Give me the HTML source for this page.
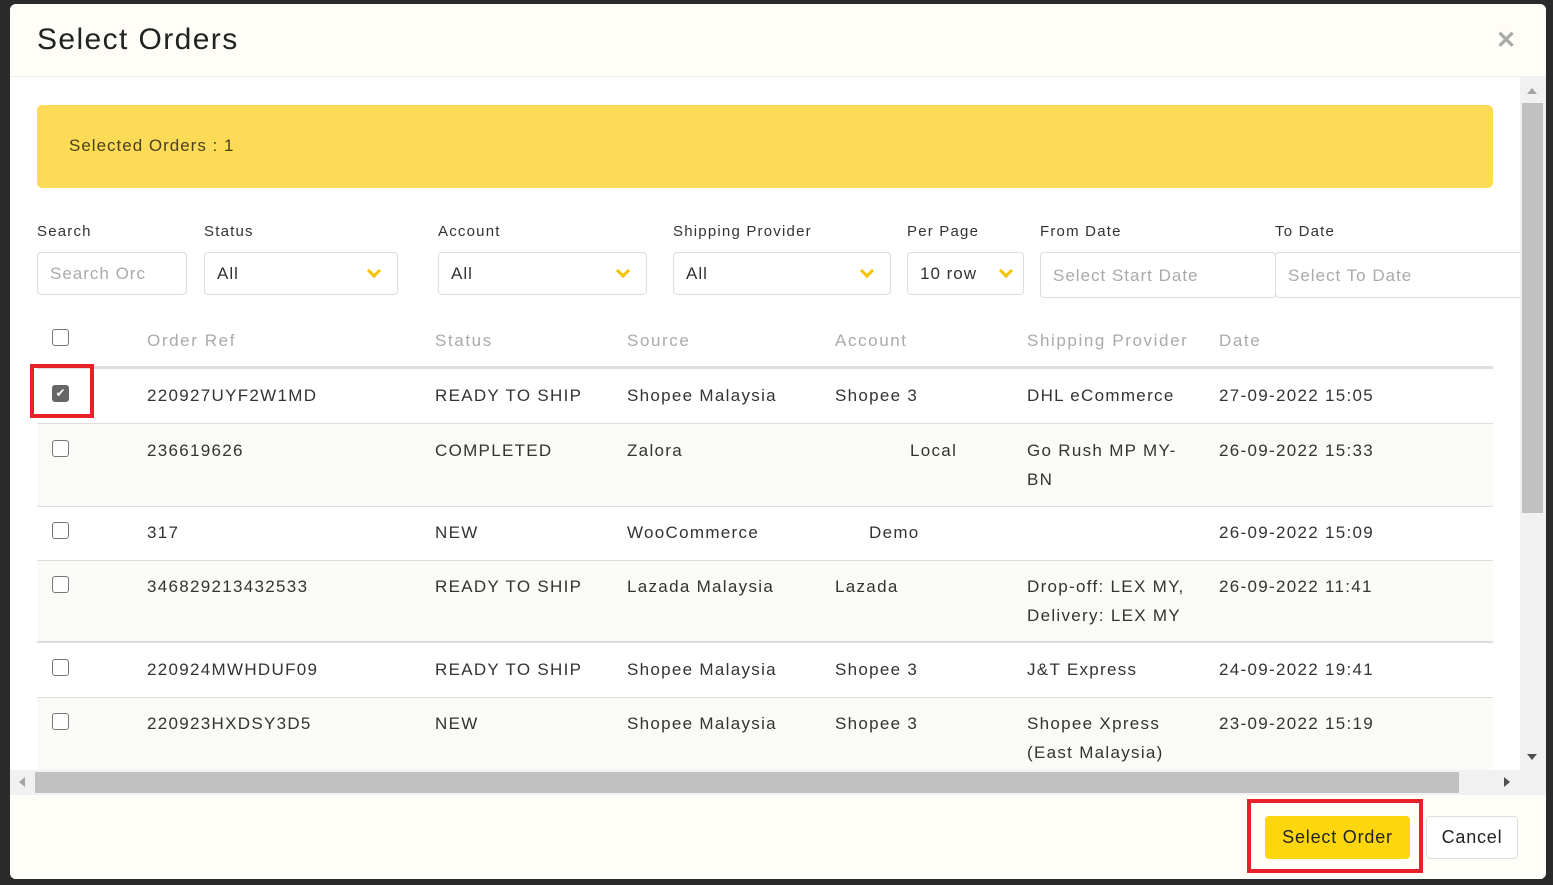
<!DOCTYPE html>
<html><head><style>
*{box-sizing:border-box;margin:0;padding:0}
body{width:1553px;height:885px;background:#2b2b2b;font-family:"Liberation Sans",sans-serif;position:relative;overflow:hidden;color:#333}
.m{position:absolute;left:10px;top:4px;width:1536px;height:875px;background:#fff;border-radius:6px;overflow:hidden}
.hd{position:absolute;left:0;top:0;width:1536px;height:73px;background:#fffdf8;border-bottom:1px solid #f1eee6}
.hd h1{position:absolute;left:27px;top:19px;font-weight:normal;font-size:30px;color:#222;letter-spacing:1.4px}
.x{position:absolute;left:1486px;top:22px;font-size:24px;color:#aaa;font-weight:bold}
.ab{position:absolute;}
.banner{left:27px;top:101px;width:1456px;height:83px;background:#fedb56;border-radius:5px;font-size:17px;color:#4a4020;padding:31px 32px;letter-spacing:1px}
.lbl{font-size:15px;color:#333;letter-spacing:1.2px;top:219px}
.inp{top:248px;height:43px;border:1px solid #ddd;border-radius:4px;font-size:17px;color:#333;padding:11px 12px;letter-spacing:1px}
.ph{color:#aaa}
.chev{position:absolute;right:18px;top:13px;width:10px;height:10px;border-right:3px solid #f5c400;border-bottom:3px solid #f5c400;transform:rotate(45deg)}
.th{top:327px;font-size:17px;color:#aaa;letter-spacing:1.6px}
.row{position:absolute;left:27px;width:1456px;border-bottom:1px solid #ddd}
.c{position:absolute;font-size:17px;color:#333;letter-spacing:1.3px;line-height:29px}
.cb{position:absolute;left:42px;width:17px;height:17px;border:1.5px solid #777;border-radius:3px;background:#fff}
.red{position:absolute;border:4px solid #e8202a}
</style></head><body>
<div class="m">
<div class="hd"><h1>Select Orders</h1><div class="x">✕</div></div>
<div class="ab banner">Selected Orders : 1</div>
<div class="ab lbl" style="left:27px">Search</div>
<div class="ab lbl" style="left:194px">Status</div>
<div class="ab lbl" style="left:428px">Account</div>
<div class="ab lbl" style="left:663px">Shipping Provider</div>
<div class="ab lbl" style="left:897px">Per Page</div>
<div class="ab lbl" style="left:1030px">From Date</div>
<div class="ab lbl" style="left:1265px">To Date</div>
<div class="ab inp ph" style="left:27px;width:150px;overflow:hidden;white-space:nowrap">Search Orc</div>
<div class="ab inp" style="left:194px;width:194px">All<span class="chev"></span></div>
<div class="ab inp" style="left:428px;width:209px">All<span class="chev"></span></div>
<div class="ab inp" style="left:663px;width:218px">All<span class="chev"></span></div>
<div class="ab inp" style="left:897px;width:117px">10 row<span class="chev" style="right:12px"></span></div>
<div class="ab inp ph" style="left:1030px;width:236px;top:248px;height:46px;padding-top:13px">Select Start Date</div>
<div class="ab inp ph" style="left:1265px;width:260px;top:248px;height:46px;padding-top:13px">Select To Date</div>
<div class="cb" style="top:325px"></div>
<div class="ab th" style="left:137px">Order Ref</div>
<div class="ab th" style="left:425px">Status</div>
<div class="ab th" style="left:617px">Source</div>
<div class="ab th" style="left:825px">Account</div>
<div class="ab th" style="left:1017px">Shipping Provider</div>
<div class="ab th" style="left:1209px">Date</div>
<div class="row" style="top:362px;height:3px;background:#ddd;border:0"></div>
<div class="row" style="top:365px;height:55px"></div>
<div class="row" style="top:420px;height:83px;background:#fafaf7"></div>
<div class="row" style="top:503px;height:54px"></div>
<div class="row" style="top:557px;height:82px;background:#fafaf7;border-bottom:2px solid #ddd"></div>
<div class="row" style="top:639px;height:55px"></div>
<div class="row" style="top:694px;height:80px;background:#fafaf7"></div>
<div class="cb" style="top:381px;background:#666;border-color:#666;color:#fff;font-size:12px;text-align:center;line-height:14px">✔</div>
<div class="red" style="left:20px;top:360px;width:64px;height:54px"></div>
<div class="c" style="left:137px;top:377px">220927UYF2W1MD</div><div class="c" style="left:425px;top:377px">READY TO SHIP</div><div class="c" style="left:617px;top:377px">Shopee Malaysia</div><div class="c" style="left:825px;top:377px">Shopee 3</div><div class="c" style="left:1017px;top:377px">DHL eCommerce</div><div class="c" style="left:1209px;top:377px">27-09-2022 15:05</div>
<div class="cb" style="top:436px"></div>
<div class="c" style="left:137px;top:432px">236619626</div><div class="c" style="left:425px;top:432px">COMPLETED</div><div class="c" style="left:617px;top:432px">Zalora</div><div class="c" style="left:900px;top:432px">Local</div><div class="c" style="left:1017px;top:432px;width:175px">Go Rush MP MY-<br>BN</div><div class="c" style="left:1209px;top:432px">26-09-2022 15:33</div>
<div class="cb" style="top:518px"></div>
<div class="c" style="left:137px;top:514px">317</div><div class="c" style="left:425px;top:514px">NEW</div><div class="c" style="left:617px;top:514px">WooCommerce</div><div class="c" style="left:859px;top:514px">Demo</div><div class="c" style="left:1209px;top:514px">26-09-2022 15:09</div>
<div class="cb" style="top:572px"></div>
<div class="c" style="left:137px;top:568px">346829213432533</div><div class="c" style="left:425px;top:568px">READY TO SHIP</div><div class="c" style="left:617px;top:568px">Lazada Malaysia</div><div class="c" style="left:825px;top:568px">Lazada</div><div class="c" style="left:1017px;top:568px">Drop-off: LEX MY,<br>Delivery: LEX MY</div><div class="c" style="left:1209px;top:568px">26-09-2022 11:41</div>
<div class="cb" style="top:655px"></div>
<div class="c" style="left:137px;top:651px">220924MWHDUF09</div><div class="c" style="left:425px;top:651px">READY TO SHIP</div><div class="c" style="left:617px;top:651px">Shopee Malaysia</div><div class="c" style="left:825px;top:651px">Shopee 3</div><div class="c" style="left:1017px;top:651px">J&amp;T Express</div><div class="c" style="left:1209px;top:651px">24-09-2022 19:41</div>
<div class="cb" style="top:709px"></div>
<div class="c" style="left:137px;top:705px">220923HXDSY3D5</div><div class="c" style="left:425px;top:705px">NEW</div><div class="c" style="left:617px;top:705px">Shopee Malaysia</div><div class="c" style="left:825px;top:705px">Shopee 3</div><div class="c" style="left:1017px;top:705px">Shopee Xpress<br>(East Malaysia)</div><div class="c" style="left:1209px;top:705px">23-09-2022 15:19</div>
<div class="ab" style="left:1510px;top:73px;width:26px;height:693px;background:#f1f1f1"></div>
<div class="ab" style="left:1512px;top:99px;width:21px;height:410px;background:#c1c1c1"></div>
<div class="ab" style="left:1517px;top:84px;border-left:5px solid transparent;border-right:5px solid transparent;border-bottom:6px solid #a3a3a3"></div>
<div class="ab" style="left:1517px;top:750px;border-left:5px solid transparent;border-right:5px solid transparent;border-top:6px solid #505050"></div>
<div class="ab" style="left:0;top:766px;width:1536px;height:25px;background:#f1f1f1"></div>
<div class="ab" style="left:25px;top:768px;width:1424px;height:21px;background:#c1c1c1"></div>
<div class="ab" style="left:9px;top:773px;border-top:5px solid transparent;border-bottom:5px solid transparent;border-right:6px solid #a3a3a3"></div>
<div class="ab" style="left:1494px;top:773px;border-top:5px solid transparent;border-bottom:5px solid transparent;border-left:6px solid #505050"></div>
<div class="ab" style="left:0;top:791px;width:1536px;height:84px;background:#fffdf8"></div>
<div class="ab" style="left:1255px;top:812px;width:145px;height:43px;background:#fdd60e;border-radius:4px;font-size:18px;color:#222;text-align:center;line-height:43px;letter-spacing:.8px">Select Order</div>
<div class="red" style="left:1237px;top:795px;width:176px;height:74px"></div>
<div class="ab" style="left:1416px;top:812px;width:92px;height:43px;border:1px solid #ddd;background:#fff;border-radius:4px;font-size:18px;color:#222;text-align:center;line-height:41px;letter-spacing:.8px">Cancel</div>
</div>
</body></html>
